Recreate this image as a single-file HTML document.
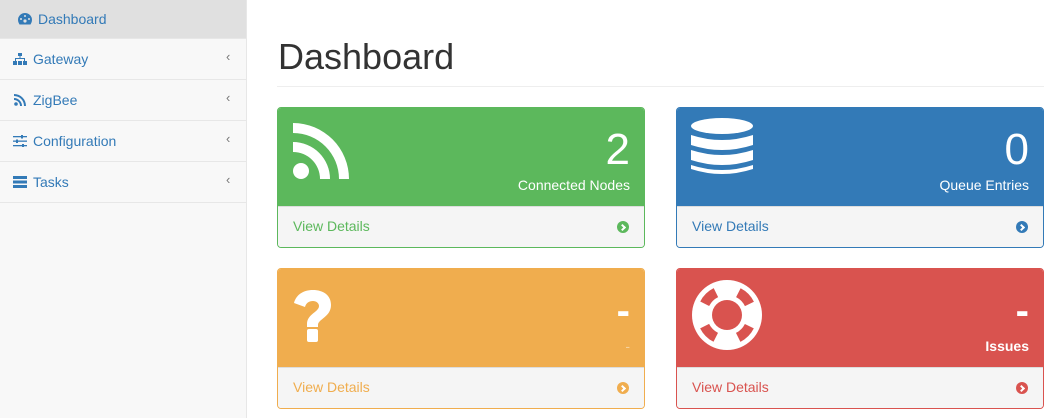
<!DOCTYPE html>
<html><head><meta charset="utf-8"><style>
*{box-sizing:border-box;margin:0;padding:0}
body{width:1051px;height:418px;overflow:hidden;background:#fff;font-family:"Liberation Sans",sans-serif;font-size:14px;color:#333;position:relative}
.side{position:absolute;left:0;top:0;width:247px;height:418px;background:#f8f8f8;border-right:1px solid #e7e7e7}
.item{height:41px;border-bottom:1px solid #e7e7e7;color:#337ab7;display:flex;align-items:center;padding-left:13px;position:relative;font-size:14px}
.item.act{background:#e0e0e0;height:39px;padding-left:18px}
.item svg{margin-right:6px;fill:#337ab7}
.item .ch{position:absolute;left:226px;top:10px;color:#777;font-size:13px}
h1{position:absolute;left:278px;top:36px;font-size:36px;font-weight:normal;color:#333}
.hr{position:absolute;left:277px;top:86px;width:767px;height:1px;background:#eee}
.p{position:absolute;width:368px;height:141px;border:1px solid;border-radius:4px;overflow:hidden}
.hd{height:98px;color:#fff;position:relative}
.hd svg{position:absolute;fill:#fff}
.num{position:absolute;right:14px;top:17px;font-size:44px}
.lab{position:absolute;right:14px;top:69px;font-size:14px}
.ft{height:41px;background:#f5f5f5;border-top:1px solid #ddd;padding:11px 15px;position:relative}
.ft .a{position:absolute;right:15px;top:14px;width:12px;height:12px;border-radius:50%}
.ft .a:after{content:"";position:absolute;left:3px;top:4px;border:solid #fff;border-width:2px 2px 0 0;width:3px;height:3px;transform:rotate(45deg)}
</style></head><body>
<div class="side">
<div class="item act"><svg width="14" height="12" viewBox="0 0 14 12"><path d="M7 0A7 7 0 0 0 0 7c0 2 1 3.5 1.5 4.5h11C13 10.5 14 9 14 7A7 7 0 0 0 7 0z"/><circle cx="7" cy="8" r="1.6" fill="#e0e0e0"/><circle cx="3" cy="6" r="1" fill="#e0e0e0"/><circle cx="7" cy="3" r="1" fill="#e0e0e0"/><circle cx="11" cy="6" r="1" fill="#e0e0e0"/></svg>Dashboard</div>
<div class="item"><svg width="14" height="12" viewBox="0 0 14 12"><rect x="5" y="0" width="4" height="3"/><rect x="6.5" y="3" width="1" height="3"/><rect x="2" y="5" width="10" height="1"/><rect x="2" y="5" width="1" height="3"/><rect x="11" y="5" width="1" height="3"/><rect x="0" y="8" width="4" height="4"/><rect x="5" y="8" width="4" height="4"/><rect x="10" y="8" width="4" height="4"/></svg>Gateway<span class="ch">&lsaquo;</span></div>
<div class="item"><svg width="14" height="12" viewBox="0 0 12 12"><circle cx="2" cy="10" r="1.8"/><path d="M0 4a8 8 0 0 1 8 8H6A6 6 0 0 0 0 6zM0 0a12 12 0 0 1 12 12H10A10 10 0 0 0 0 2z"/></svg>ZigBee<span class="ch">&lsaquo;</span></div>
<div class="item"><svg width="14" height="12" viewBox="0 0 14 12"><rect y="1" width="14" height="1.3"/><rect y="5.5" width="14" height="1.3"/><rect y="10" width="14" height="1.3"/><rect x="8" y="0" width="2" height="3.5"/><rect x="3" y="4.5" width="2" height="3.5"/><rect x="9" y="9" width="2" height="3.5"/></svg>Configuration<span class="ch">&lsaquo;</span></div>
<div class="item"><svg width="14" height="12" viewBox="0 0 14 12"><rect y="0" width="14" height="3"/><rect y="4.5" width="14" height="3"/><rect y="9" width="14" height="3"/></svg>Tasks<span class="ch">&lsaquo;</span></div>
</div>
<h1>Dashboard</h1><div class="hr"></div>

<div class="p" style="left:277px;top:107px;border-color:#5cb85c">
<div class="hd" style="background:#5cb85c"><svg style="left:15px;top:15px" width="56" height="56" viewBox="0 0 56 56"><circle cx="8" cy="48" r="8"/><path d="M0 19a37 37 0 0 1 37 37H27A27 27 0 0 0 0 29zM0 0a56 56 0 0 1 56 56H46A46 46 0 0 0 0 10z"/></svg>
<div class="num">2</div><div class="lab">Connected Nodes</div></div>
<div class="ft" style="color:#5cb85c">View Details<span class="a" style="background:#5cb85c"></span></div></div>

<div class="p" style="left:676px;top:107px;border-color:#337ab7">
<div class="hd" style="background:#337ab7"><svg style="left:14px;top:10px" width="62" height="58" viewBox="0 0 62 58"><ellipse cx="31" cy="8" rx="31" ry="8"/><path d="M0 17q31 10 62 0v10q-31 10-62 0zM0 32q31 10 62 0v10q-31 10-62 0zM0 47q31 10 62 0v4q-31 10-62 0z"/></svg>
<div class="num">0</div><div class="lab">Queue Entries</div></div>
<div class="ft" style="color:#337ab7">View Details<span class="a" style="background:#337ab7"></span></div></div>

<div class="p" style="left:277px;top:268px;border-color:#f0ad4e">
<div class="hd" style="background:#f0ad4e"><svg style="left:16px;top:21px" width="38" height="53" viewBox="0 0 38 53"><path d="M19 0C9 0 2 5 0 13l11 4c1-4 4-6 8-6 3 0 6 2 6 5 0 6-12 8-12 18v3h11v-2c0-6 13-8 13-20C37 5 29 0 19 0z"/><rect x="13" y="39" width="11" height="13" rx="2"/></svg>
<div class="num" style="font-weight:bold;font-size:40px;top:20px">-</div><div class="lab" style="color:#f6d29d">-</div></div>
<div class="ft" style="color:#f0ad4e">View Details<span class="a" style="background:#f0ad4e"></span></div></div>

<div class="p" style="left:676px;top:268px;border-color:#d9534f">
<div class="hd" style="background:#d9534f"><svg style="left:14px;top:10px" width="72" height="72" viewBox="0 0 72 72"><circle cx="36" cy="36" r="35" fill="#fff"/><circle cx="36" cy="36" r="25" fill="none" stroke="#d9534f" stroke-width="10" stroke-dasharray="16 23.27" stroke-dashoffset="-11.6"/><circle cx="36" cy="36" r="15" fill="#d9534f"/></svg>
<div class="num" style="font-weight:bold;font-size:40px;top:20px">-</div><div class="lab" style="font-weight:bold">Issues</div></div>
<div class="ft" style="color:#d9534f">View Details<span class="a" style="background:#d9534f"></span></div></div>
</body></html>
